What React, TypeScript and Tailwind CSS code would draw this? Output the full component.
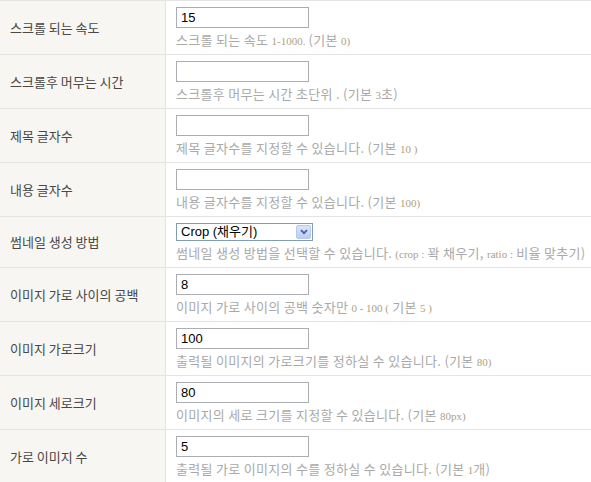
import React from "react";

const N = ({ children }: { children: React.ReactNode }) => (
  <span className="text-[11px] tracking-normal text-[#ad9f82] [font-family:'Liberation_Serif','Times_New_Roman',serif]">
    {children}
  </span>
);

type Row = {
  label: string;
  value?: string;
  select?: boolean;
  hint: React.ReactNode;
};

const rows: Row[] = [
  {
    label: "스크롤 되는 속도",
    value: "15",
    hint: (
      <>
        스크롤 되는 속도 <N>1-1000.</N> (기본 <N>0)</N>
      </>
    ),
  },
  {
    label: "스크롤후 머무는 시간",
    value: "",
    hint: (
      <>
        스크롤후 머무는 시간 초단위 . (기본 <N>3</N>초)
      </>
    ),
  },
  {
    label: "제목 글자수",
    value: "",
    hint: (
      <>
        제목 글자수를 지정할 수 있습니다. (기본 <N>10 )</N>
      </>
    ),
  },
  {
    label: "내용 글자수",
    value: "",
    hint: (
      <>
        내용 글자수를 지정할 수 있습니다. (기본 <N>100)</N>
      </>
    ),
  },
  {
    label: "썸네일 생성 방법",
    select: true,
    hint: (
      <>
        썸네일 생성 방법을 선택할 수 있습니다. <N>(crop :</N> 꽉 채우기, <N>ratio :</N> 비율 맞추기)
      </>
    ),
  },
  {
    label: "이미지 가로 사이의 공백",
    value: "8",
    hint: (
      <>
        이미지 가로 사이의 공백 숫자만 <N>0 - 100 (</N> 기본 <N>5 )</N>
      </>
    ),
  },
  {
    label: "이미지 가로크기",
    value: "100",
    hint: (
      <>
        출력될 이미지의 가로크기를 정하실 수 있습니다. (기본 <N>80)</N>
      </>
    ),
  },
  {
    label: "이미지 세로크기",
    value: "80",
    hint: (
      <>
        이미지의 세로 크기를 지정할 수 있습니다. (기본 <N>80px)</N>
      </>
    ),
  },
  {
    label: "가로 이미지 수",
    value: "5",
    hint: (
      <>
        출력될 가로 이미지의 수를 정하실 수 있습니다. (기본 <N>1</N>개)
      </>
    ),
  },
];

function Select() {
  return (
    <div className="flex h-[18px] w-[137px] shrink-0 items-center border border-[#7f9db9] bg-white">
      <span className="flex-1 pl-[4px] text-[13px] leading-[16px] text-black [font-family:'Liberation_Sans','Noto_Sans_CJK_KR',sans-serif]">
        Crop (채우기)
      </span>
      <span className="mr-[1px] flex h-[14px] w-[15px] items-center justify-center rounded-[2px] border border-[#b7c8f2] bg-gradient-to-b from-[#dbe5fd] to-[#b9cbf7]">
        <svg width="8" height="6" viewBox="0 0 8 6">
          <path d="M1 1.2 L4 4.2 L7 1.2" fill="none" stroke="#4d6185" strokeWidth="1.8" />
        </svg>
      </span>
    </div>
  );
}

export default function App() {
  return (
    <div className="w-[591px] h-[482px] overflow-hidden bg-white border-t border-[#e4e4e4] [font-family:'Noto_Sans_CJK_KR','Liberation_Sans',sans-serif]">
      {rows.map((r, i) => (
        <div
          key={i}
          className={`flex border-b border-[#e4e4e4] ${r.select ? "h-[51px]" : "h-[54px]"}`}
        >
          <div className="flex w-[166px] shrink-0 items-center border-r border-[#e2e2e2] bg-[#f7f6f2] pl-[10px] text-[13px] leading-[16px] text-[#484848]">
            {r.label}
          </div>
          <div className="flex flex-1 flex-col items-start pl-[10px] pt-[6px]">
            {r.select ? (
              <Select />
            ) : (
              <div className="flex h-[21px] w-[133px] shrink-0 items-center border border-[#abadb3] bg-white pl-[4px] text-[13px] text-black [font-family:'Liberation_Sans',sans-serif]">
                {r.value}
              </div>
            )}
            <div className="mt-[3px] h-[18px] whitespace-nowrap text-[13px] leading-[18px] tracking-[0.3px] text-[#a9a9a9]">
              {r.hint}
            </div>
          </div>
        </div>
      ))}
    </div>
  );
}
